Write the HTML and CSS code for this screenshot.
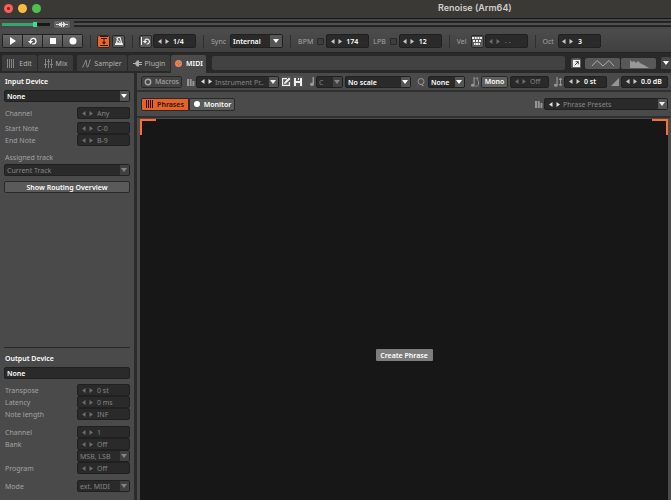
FILE: index.html
```html
<!DOCTYPE html>
<html lang="en">
<head>
<meta charset="utf-8">
<title>Renoise (Arm64)</title>
<link rel="stylesheet" href="styles.css">
</head>
<body>
<svg class="defs" aria-hidden="true">
  <symbol id="prev" viewBox="0 0 4 5"><path d="M3.500 0v5L0 2.500z"/></symbol>
  <symbol id="next" viewBox="0 0 4 5"><path d="M.5 0v5L4 2.500z"/></symbol>
  <symbol id="note" viewBox="0 0 10 10"><path d="M3.500 0h1.200v8.200a1.900 1.500 0 1 1-1.200-1.300z"/></symbol>
  <symbol id="note-slim" viewBox="0 0 6 9"><path d="M3.500 0H5v7a2 1.800 0 1 1-1.500-1.500z"/></symbol>
  <symbol id="books" viewBox="0 0 8 8"><path d="M0 1h2v7H0zM2.700 1h2v7h-2zM5.400 3h2v5h-2z"/></symbol>
</svg>
<header class="titlebar">
  <span class="light close"></span><span class="light min"></span><span class="light max"></span>
  <h1>Renoise (Arm64)</h1>
</header>
<div class="status">
  <input class="volume" type="range" min="0" max="100" value="70" aria-label="Master volume">
  <button class="meter-btn" aria-label="Scope"><svg viewBox="0 0 12 5"><path d="M0 2h3V1h2V0h1v2h1V0h1v1h1v1h3v1H9v1H8v1H7V3H6v2H5V4H3V3H0z"/></svg></button>
  <span class="scope"></span>
</div>
<div class="transport">
  <div class="play">
    <button aria-label="Play"><svg viewBox="0 0 10 10"><path d="M2 1l6 4-6 4z"/></svg></button>
    <button aria-label="Loop pattern"><svg viewBox="0 0 10 10"><path d="M2.500 6V4.500a2.800 2.800 0 1 1 3 3.500H4" fill="none" stroke="currentColor" stroke-width="1.200"/><path d="M0 5h5L2.500 8z"/></svg></button>
    <button aria-label="Stop"><svg viewBox="0 0 10 10"><path d="M2 2h6v6H2z"/></svg></button>
    <button aria-label="Record"><svg viewBox="0 0 10 10"><circle cx="5" cy="5" r="3.500"/></svg></button>
  </div>
  <i class="sep"></i>
  <div class="pair">
    <button class="sq on" aria-label="Follow"><svg viewBox="0 0 10 10"><path d="M1 0h8v1H1zM1 9h8v1H1zM2 2h6v1H5.500v3H7L5 8.500 3 6h1.500V3H2z"/></svg></button>
    <button class="sq" aria-label="Metronome"><svg viewBox="0 0 10 10"><path fill-rule="evenodd" d="M3.500 1h3l2 7h-7zM4.300 2L3.200 6.500h3.600L5.700 2z"/><path d="M6 6L2 1.500" fill="none" stroke="currentColor"/><path d="M1 7.500h8V9H1z"/></svg></button>
  </div>
  <i class="sep"></i>
  <div class="tight">
    <button class="sq" aria-label="Quantize"><svg viewBox="0 0 10 10"><path d="M0 1h1v8H0z"/><path d="M4 5V4a2.500 2.500 0 1 1 2.500 4H5.500" fill="none" stroke="currentColor" stroke-width="1.200"/><path d="M1.700 5h4.500L4 7.500z"/></svg></button>
    <div class="spin"><button aria-label="Less"><svg><use href="#prev"/></svg></button><button aria-label="More"><svg><use href="#next"/></svg></button><input value="1/4" aria-label="Quantize value"></div>
  </div>
  <i class="sep"></i>
  <label for="sync">Sync</label>
  <div class="pick sync"><select id="sync"><option>Internal</option></select></div>
  <i class="sep"></i>
  <label for="bpm">BPM</label><input type="checkbox" aria-label="Automate BPM">
  <div class="spin"><button aria-label="Less"><svg><use href="#prev"/></svg></button><button aria-label="More"><svg><use href="#next"/></svg></button><input id="bpm" value="174"></div>
  <label for="lpb">LPB</label><input type="checkbox" aria-label="Automate LPB">
  <div class="spin"><button aria-label="Less"><svg><use href="#prev"/></svg></button><button aria-label="More"><svg><use href="#next"/></svg></button><input id="lpb" value="12"></div>
  <i class="sep"></i>
  <label for="vel">Vel</label>
  <div class="tight">
    <button class="sq" aria-label="Keyboard velocity"><svg viewBox="0 0 10 10"><path d="M0 1h2v2H0zM2.700 1h2v2h-2zM5.400 1h2v2h-2zM8 1h2v2H8zM1 4h2v2H1zM4 4h2v2H4zM7 4h2v2H7zM2 7h1.500v2H2zM4 7h2v2H4zM6.500 7H8v2H6.500z"/></svg></button>
    <div class="spin off"><button aria-label="Less"><svg><use href="#prev"/></svg></button><button aria-label="More"><svg><use href="#next"/></svg></button><input id="vel" value="- -"></div>
  </div>
  <i class="sep"></i>
  <label for="oct">Oct</label>
  <div class="spin"><button aria-label="Less"><svg><use href="#prev"/></svg></button><button aria-label="More"><svg><use href="#next"/></svg></button><input id="oct" value="3"></div>
</div>
<nav class="tabs">
  <button><svg class="dim" viewBox="0 0 9 9"><path d="M0 0h1v9H0zM2 0h1v9H2zM4 0h1v9H4zM6 0h1v9H6z"/></svg>Edit</button>
  <button><svg class="dim" viewBox="0 0 9 9"><path d="M1 0h1v9H1zM4 0h1v9H4zM7 0h1v9H7zM0 5h3v1H0zM3 2h3v1H3zM6 5h3v1H6z"/></svg>Mix</button>
  <button class="wide"><svg class="dim" viewBox="0 0 9 9"><path d="M0 8h1l3-7 1 7h1l2-7h1" fill="none" stroke="currentColor"/></svg>Sampler</button>
  <button class="plug"><svg viewBox="0 0 9 9"><path d="M0 4h2l2-2.500h2V3h3v1H6v1h3v1H6v1.500H4L2 5H0z"/></svg>Plugin</button>
  <button class="active"><svg viewBox="0 0 9 9"><circle cx="4.500" cy="4.500" r="3.500" fill="#e8855c"/><path d="M3 4v1M4.500 2.500v1M6 4v1M4.500 5.500v1" stroke="#b5603c"/></svg>MIDI</button>
  <span class="info"></span>
  <button class="pop" aria-label="Detach"><svg viewBox="0 0 10 10"><path fill="#eee" d="M1 1h8v8H1z"/><path d="M3 7l4-4M4 3h3v3" fill="none" stroke="#333"/></svg></button>
  <div class="views">
    <button aria-label="Waveform"><svg viewBox="0 0 34 9"><path d="M6 7l5-5.500L17 7l6-5.500L28 7" fill="none" stroke="#aaa"/></svg></button><button aria-label="Spectrum"><svg viewBox="0 0 34 9"><path fill="#999" d="M8 9V1l2 2 2-1 2 2 2-2 2 2 4 2 5 3z"/></svg></button>
  </div>
  <button class="more" aria-label="Menu"><svg viewBox="0 0 6 4"><path d="M0 0h6L3 4z"/></svg></button>
</nav>
<div class="work">
  <aside>
    <section>
      <h2><label for="indev">Input Device</label></h2>
      <div class="pick indev"><select id="indev"><option>None</option></select></div>
      <div class="row"><label for="ch">Channel</label><div class="spin off"><button aria-label="Less"><svg><use href="#prev"/></svg></button><button aria-label="More"><svg><use href="#next"/></svg></button><input id="ch" value="Any"></div></div>
      <div class="row gap"><label for="sn">Start Note</label><div class="spin off"><button aria-label="Less"><svg><use href="#prev"/></svg></button><button aria-label="More"><svg><use href="#next"/></svg></button><input id="sn" value="C-0"></div></div>
      <div class="row"><label for="en">End Note</label><div class="spin off"><button aria-label="Less"><svg><use href="#prev"/></svg></button><button aria-label="More"><svg><use href="#next"/></svg></button><input id="en" value="B-9"></div></div>
      <label class="block" for="track">Assigned track</label>
      <div class="pick off"><select id="track"><option>Current Track</option></select></div>
      <button class="btn routing">Show Routing Overview</button>
    </section>
    <section class="output">
      <h2><label for="outdev">Output Device</label></h2>
      <input class="field" id="outdev" value="None">
      <div class="row"><label for="tr">Transpose</label><div class="spin off"><button aria-label="Less"><svg><use href="#prev"/></svg></button><button aria-label="More"><svg><use href="#next"/></svg></button><input id="tr" value="0 st"></div></div>
      <div class="row"><label for="la">Latency</label><div class="spin off"><button aria-label="Less"><svg><use href="#prev"/></svg></button><button aria-label="More"><svg><use href="#next"/></svg></button><input id="la" value="0 ms"></div></div>
      <div class="row"><label for="nl">Note length</label><div class="spin off"><button aria-label="Less"><svg><use href="#prev"/></svg></button><button aria-label="More"><svg><use href="#next"/></svg></button><input id="nl" value="INF"></div></div>
      <div class="row group"><label for="oc">Channel</label><div class="spin off"><button aria-label="Less"><svg><use href="#prev"/></svg></button><button aria-label="More"><svg><use href="#next"/></svg></button><input id="oc" value="1"></div></div>
      <div class="row"><label for="bk">Bank</label><div class="spin off"><button aria-label="Less"><svg><use href="#prev"/></svg></button><button aria-label="More"><svg><use href="#next"/></svg></button><input id="bk" value="Off"></div></div>
      <div class="row"><span></span><div class="pick off"><select aria-label="Bank order"><option>MSB, LSB</option></select></div></div>
      <div class="row"><label for="pg">Program</label><div class="spin off"><button aria-label="Less"><svg><use href="#prev"/></svg></button><button aria-label="More"><svg><use href="#next"/></svg></button><input id="pg" value="Off"></div></div>
      <div class="row group"><label for="mode">Mode</label><div class="pick off"><select id="mode"><option>ext. MIDI</option></select></div></div>
    </section>
  </aside>
  <main>
    <div class="bar instrument">
      <button class="btn macros"><svg viewBox="0 0 8 8"><circle cx="4" cy="4" r="2.700" fill="none" stroke="currentColor" stroke-width="1.400"/></svg>Macros</button>
      <div class="tight lead"><svg class="ico"><use href="#books"/></svg>
      <div class="spin off lit preset"><button aria-label="Previous"><svg><use href="#prev"/></svg></button><button aria-label="Next"><svg><use href="#next"/></svg></button><div class="pick"><select aria-label="Instrument preset"><option>Instrument Pr..</option></select></div></div></div>
      <button class="tool" aria-label="Edit properties"><svg viewBox="0 0 10 10"><path d="M1 1h5v1.200H2.200v5.600h5.600V5H9v4H1z"/><path d="M3 7l.5-2L8 .5 9.500 2 5 6.500z"/></svg></button>
      <button class="tool" aria-label="Save"><svg viewBox="0 0 10 10"><path fill-rule="evenodd" d="M1 1h8v8H1zM3 1v3h4V1zM3 6v3h4V6z"/><path d="M5 1h1v2H5z"/></svg></button>
      <div class="tight key"><svg class="ico thin"><use href="#note-slim"/></svg><div class="pick off"><select aria-label="Key"><option>C</option></select></div></div>
      <div class="pick scale"><select aria-label="Scale"><option>No scale</option></select></div>
      <div class="tight quant"><svg class="ico" viewBox="0 0 8 8"><circle cx="4" cy="3.500" r="3" fill="none" stroke="currentColor"/><path d="M4 6h1l2 2H5z"/></svg><div class="pick"><select aria-label="Trigger quantize"><option>None</option></select></div></div>
      <div class="tight mono"><svg class="ico big" viewBox="0 0 10 10"><use href="#note" width="10" height="10"/><path d="M5 8.500c1.500 1.500 3.500.5 3.500-1.500V4.500c0-1-1.500-1-1.500-3M5.500 2L7 .5 8.500 2" fill="none" stroke="currentColor"/></svg><button class="btn lit-btn">Mono</button></div>
      <div class="spin off glide"><button aria-label="Less"><svg><use href="#prev"/></svg></button><button aria-label="More"><svg><use href="#next"/></svg></button><input value="Off" aria-label="Glide"></div>
      <div class="tight trans"><svg class="ico big" viewBox="0 0 10 10"><use href="#note" width="10" height="10"/><path d="M7.500 1v8M6 3l1.500-2L9 3M6 7l1.500 2L9 7" fill="none" stroke="currentColor"/></svg><div class="spin"><button aria-label="Less"><svg><use href="#prev"/></svg></button><button aria-label="More"><svg><use href="#next"/></svg></button><input value="0 st" aria-label="Transpose"></div></div>
      <div class="tight end gain"><svg class="ico" viewBox="0 0 8 8"><path d="M0 8l8-8v8z"/></svg><div class="spin"><button aria-label="Less"><svg><use href="#prev"/></svg></button><button aria-label="More"><svg><use href="#next"/></svg></button><input value="0.0 dB" aria-label="Volume"></div></div>
    </div>
    <div class="bar phrases">
      <div class="modes">
        <button class="on"><svg viewBox="0 0 8 8"><path d="M0 0h1v8H0zM2 0h1v8H2zM4 0h1v8H4zM6 0h1v8H6z"/></svg>Phrases</button><button><svg viewBox="0 0 8 8"><circle cx="4" cy="4" r="3"/></svg>Monitor</button>
      </div>
      <div class="tight end"><svg class="ico"><use href="#books"/></svg>
      <div class="spin off lit phrase-preset"><button aria-label="Previous"><svg><use href="#prev"/></svg></button><button aria-label="Next"><svg><use href="#next"/></svg></button><div class="pick"><select aria-label="Phrase preset"><option>Phrase Presets</option></select></div></div></div>
    </div>
    <div class="stage">
      <div class="canvas">
        <span class="corner left"></span><span class="corner right"></span>
        <button class="create">Create Phrase</button>
      </div>
    </div>
  </main>
</div>
</body>
</html>
```

FILE: styles.css
```css
* { box-sizing: border-box; }
html, body { height: 100%; }
body {
  margin: 0;
  display: flex;
  flex-direction: column;
  overflow: hidden;
  background: #484848;
  color: #a2a2a2;
  font: 7px/11px "Noto Sans", sans-serif;
}
button, input, select {
  margin: 0;
  padding: 0;
  border: 0;
  border-radius: 0;
  background: none;
  color: inherit;
  font: inherit;
  appearance: none;
  outline: 0;
}
button { display: flex; align-items: center; justify-content: center; white-space: nowrap; }
svg { fill: currentColor; flex: none; display: block; }
.defs { position: absolute; width: 0; height: 0; }
h1, h2 { margin: 0; }

.titlebar { flex: none; height: 19px; display: flex; align-items: center; gap: 4px; padding: 0 4px 2px; background: #3b3936; border-bottom: 1px solid #171717; }
.light { width: 9px; height: 9px; border-radius: 50%; margin-right: 1px; }
.close { background: radial-gradient(circle, #8d201a 1px, #fd5f58 2px); }
.min { background: #fdbc40; }
.max { background: #4fc14a; }
.titlebar h1 { flex: 1; padding-left: 392px; font: 600 9px/12px Inter, sans-serif; color: #d0cfcd; }

.status { flex: none; height: 10px; display: flex; align-items: center; gap: 4px; padding-left: 2px; background: #484848; }
.volume { width: 48px; height: 5px; background: linear-gradient(90deg, #35a56c 68%, #171717 68%) center / 100% 3px no-repeat; }
.volume::-webkit-slider-thumb { appearance: none; width: 4px; height: 5px; background: #3ddc91; }
.meter-btn { width: 16px; height: 7px; border-radius: 2px; background: #666; color: #ddd; }
.meter-btn svg { width: 12px; height: 5px; }
.scope { flex: 1; height: 6px; border: solid #242424; border-width: 2px 0; background: #505050; }

.transport { flex: none; height: 24px; display: flex; align-items: center; padding: 1px 2px 0; gap: 3px; background: linear-gradient(#4c4c4c, #404040); border-bottom: 1px solid #242424; }
.transport label { padding: 0 1px; }
.play, .pair, .tight, .views, .modes { display: flex; align-items: center; }
.pair { gap: 2px; }
.tight { gap: 1px; }
.play { gap: 1px; padding: 1px; background: #222; border-radius: 2px; }
.play button { width: 19px; height: 12px; background: linear-gradient(#686868, #525252); color: #fff; }
.play svg { width: 10px; height: 10px; }
.sep { width: 1px; height: 13px; margin: 0 3px 0 4px; background: #303030; }
.sq { width: 13px; height: 13px; border: 1px solid #292929; border-radius: 2px; background: #5a5a5a; color: #eee; }
.sq svg { width: 10px; height: 10px; }
.sq.on { background: #f1642a; color: #33190d; }
input[type=checkbox] { width: 7px; height: 7px; margin-right: -1px; border: 1px solid #292929; background: #3d3d3d; border-radius: 1px; }

.spin { display: flex; align-items: center; height: 12px; width: 43px; padding-left: 2px; border: 1px solid #202020; border-radius: 2px; background: #2a2a2a; color: #fff; font-weight: 600; }
.spin > button { width: 7px; height: 8px; flex: none; color: #ccc; }
.spin > button svg { width: 4px; height: 5px; }
.spin input { min-width: 0; width: 100%; padding-left: 3px; height: 10px; }
.transport .spin, .transport .pick { height: 14px; }
.spin.off { color: #858585; font-weight: 400; }
.spin.off > button { color: #6c6c6c; }
.spin.off.lit > button { color: #ddd; }
.spin .pick { flex: 1; border: 0; height: 100%; color: inherit; font-weight: 400; }
.spin.lit .pick::after { border-top-color: #eee; }

.pick { position: relative; height: 12px; border: 1px solid #202020; border-radius: 2px; background: #2a2a2a; color: #fff; font-weight: 600; }
.pick.off { color: #858585; font-weight: 400; }
.pick select { display: block; width: 100%; height: 100%; padding: 0 10px 0 2px; }
.pick::before { content: ""; position: absolute; top: 0; right: 0; bottom: 0; width: 9px; background: #555; pointer-events: none; }
.pick::after { content: ""; position: absolute; right: 2px; top: calc(50% - 2px); border: solid transparent; border-width: 4px 3px 0; border-top-color: currentColor; pointer-events: none; }
.pick.off::before { background: #414141; }
.transport .pick::before { width: 12px; }
.transport .pick::after { right: 3px; }
.transport .sync { width: 53px; }

.tabs { flex: none; height: 20px; display: flex; align-items: center; gap: 1px; padding: 0 0 0 2px; background: #292929; }
.tabs > button { height: 16px; width: 35px; gap: 3px; background: #3b3b3b; border-radius: 2px 2px 0 0; color: #b0b0b0; }
.tabs > button svg { width: 9px; height: 9px; }
.tabs .dim { color: #858585; }
.tabs > .wide { width: 50px; margin-left: 3px; }
.tabs > .plug { width: 42px; }
.tabs > .active { height: auto; align-self: stretch; margin-top: 2px; padding-bottom: 2px; background: #4b4b4b; color: #fff; font-weight: 600; }
.info { flex: 1; height: 14px; margin: 0 5px; background: #424242; border-radius: 2px; }
.tabs > .pop { width: 10px; height: 10px; margin-right: 3px; background: #555; }
.views { gap: 1px; margin-right: 4px; }
.views button { width: 35px; height: 11px; background: #585858; border-radius: 2px; }
.views svg { width: 34px; height: 9px; }
.tabs > .more { width: 10px; height: 12px; background: #484848; color: #fff; }
.tabs > .more svg { width: 6px; height: 4px; }

.work { flex: 1; min-height: 0; display: flex; }
aside { flex: none; width: 137px; display: flex; flex-direction: column; justify-content: space-between; padding: 3px 4px 8px; border-right: 3px solid #2b2b2b; background: #4a4a4a; }
section { display: flex; flex-direction: column; }
label { padding-left: 1px; }
h2 { font: 600 7px/11px "Noto Sans", sans-serif; color: #fff; }
.indev { margin: 3px 0 5px; }
.row { display: grid; grid-template-columns: 1fr 53px; align-items: center; }
.row .spin, .row .pick { width: 53px; }
.gap { margin-top: 3px; }
.block { margin: 6px 0 1px; }
.btn { height: 12px; border: 1px solid #292929; border-radius: 2px; background: #5a5a5a; color: #fff; font-weight: 600; }
.routing { margin-top: 5px; }
.output { border-top: 1px solid #282828; padding-top: 5px; }
.field { height: 12px; margin: 3px 0 5px; padding-left: 2px; border: 1px solid #202020; border-radius: 2px; background: #2a2a2a; color: #fff; font-weight: 600; }
.group { margin-top: 6px; }

main { flex: 1; min-width: 0; display: flex; flex-direction: column; background: #4a4a4a; }
.bar { flex: none; display: flex; align-items: center; padding: 0 3px 0 4px; border-bottom: 2px solid #303030; }
.instrument { height: 19px; gap: 2px; }
.phrases { height: 26px; }
.end { margin-left: auto; }
.ico { width: 8px; height: 8px; color: #959595; }
.ico.thin { width: 6px; height: 9px; }
.ico.big { width: 10px; height: 10px; }
.macros { width: 41px; gap: 3px; background: #444; color: #aaa; font-weight: 400; }
.macros svg { width: 8px; height: 8px; }
.lead { margin-left: 3px; }
.preset { width: 83px; }
.tool { width: 10px; height: 11px; background: #555; color: #eee; }
.tool svg { width: 10px; height: 10px; }
.key { margin-left: 4px; }
.key .pick { width: 27px; }
.scale { width: 66px; }
.quant { margin-left: 4px; gap: 3px; }
.quant .pick { width: 37px; }
.mono { margin-left: 3px; gap: 1px; }
.lit-btn { width: 27px; background: #606060; }
.glide { width: 39px; }
.trans { margin-left: 2px; gap: 1px; }
.gain { gap: 2px; }
.gain .spin { width: 47px; }
.modes button { height: 13px; width: 46px; gap: 3px; border: 1px solid #292929; border-radius: 0 2px 2px 0; background: #5a5a5a; color: #fff; font-weight: 600; }
.modes .on { width: 48px; border-radius: 2px 0 0 2px; background: #e5622b; color: #2b1307; }
.modes svg { width: 8px; height: 8px; }
.phrase-preset { width: 124px; }
.stage { flex: 1; display: flex; padding: 1px 3px 0 3px; }
.canvas { position: relative; flex: 1; display: grid; place-items: center; padding-top: 91px; background: #171717; }
.corner { position: absolute; top: 0; width: 16px; height: 16px; border-top: 2px solid #ff6e30; }
.left { left: 0; border-left: 2px solid #ff6e30; }
.right { right: 0; border-right: 2px solid #ff6e30; }
.create { width: 57px; height: 12px; border-radius: 1px; background: #7d7d7d; color: #fff; font-weight: 600; }
```
